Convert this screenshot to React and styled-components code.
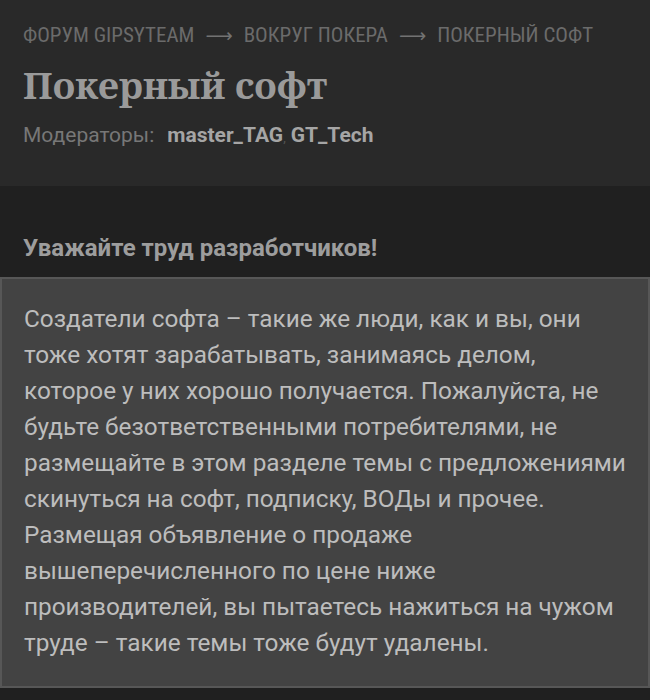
import styled, { createGlobalStyle } from "styled-components";

const GlobalStyle = createGlobalStyle`
  html, body {
    margin: 0;
    padding: 0;
    background: #202020;
  }
  body {
    font-family: Roboto, "Noto Sans", sans-serif;
  }
`;

const Page = styled.div`
  width: 650px;
  min-height: 700px;
  background: #202020;
  overflow: hidden;
`;

const Header = styled.header`
  background: #292929;
  padding: 21px 23px 0;
  height: 186px;
  box-sizing: border-box;
`;

const Crumbs = styled.nav`
  display: flex;
  align-items: center;
  gap: 11px;
  font-family: "Roboto Condensed", Roboto, sans-serif;
  font-size: 21px;
  color: #6b6b6b;
  text-transform: uppercase;
  line-height: 28px;
  white-space: nowrap;
`;

const Arrow = styled.span`
  font-family: "DejaVu Sans", sans-serif;
  font-size: 19px;
  color: #727272;
`;

const Title = styled.h1`
  margin: 13px 0 0;
  font-family: "Noto Serif", "DejaVu Serif", serif;
  font-weight: 700;
  font-size: 37px;
  line-height: 46px;
  color: #9a9a9a;
`;

const Moderators = styled.div`
  margin-top: 13px;
  display: flex;
  align-items: baseline;
  font-size: 21px;
  line-height: 28px;
  color: #777;
`;

const ModLabel = styled.span`
  margin-right: 13px;
`;

const ModName = styled.a`
  font-weight: 700;
  color: #a5a5a5;
  text-decoration: none;
`;

const Sep = styled.span`
  color: #555;
  margin-right: 5px;
  font-size: 13px;
`;

const Notice = styled.section`
  padding-top: 46px;
`;

const NoticeTitle = styled.h2`
  margin: 0 23px 13px;
  font-weight: 700;
  font-size: 24px;
  line-height: 32px;
  color: #9d9d9d;
`;

const NoticeBox = styled.div`
  background: #434343;
  border: 2px solid #575757;
  padding: 22px 18px 25px 22px;
  color: #bdbdbd;
  font-size: 24.35px;
  line-height: 36px;
`;

export default function App() {
  return (
    <Page>
      <GlobalStyle />
      <Header>
        <Crumbs>
          <span>Форум GipsyTeam</span>
          <Arrow>⟶</Arrow>
          <span>Вокруг покера</span>
          <Arrow>⟶</Arrow>
          <span>Покерный софт</span>
        </Crumbs>
        <Title>Покерный софт</Title>
        <Moderators>
          <ModLabel>Модераторы:</ModLabel>
          <ModName href="#">master_TAG</ModName>
          <Sep>,</Sep>
          <ModName href="#">GT_Tech</ModName>
        </Moderators>
      </Header>
      <Notice>
        <NoticeTitle>Уважайте труд разработчиков!</NoticeTitle>
        <NoticeBox>
          Создатели софта – такие же люди, как и вы, они тоже хотят
          зарабатывать, занимаясь делом, которое у них хорошо получается.
          Пожалуйста, не будьте безответственными потребителями, не размещайте
          в этом разделе темы с предложениями скинуться на софт, подписку, ВОДы
          и прочее. Размещая объявление о продаже вышеперечисленного по цене
          ниже производителей, вы пытаетесь нажиться на чужом труде – такие
          темы тоже будут удалены.
        </NoticeBox>
      </Notice>
    </Page>
  );
}
